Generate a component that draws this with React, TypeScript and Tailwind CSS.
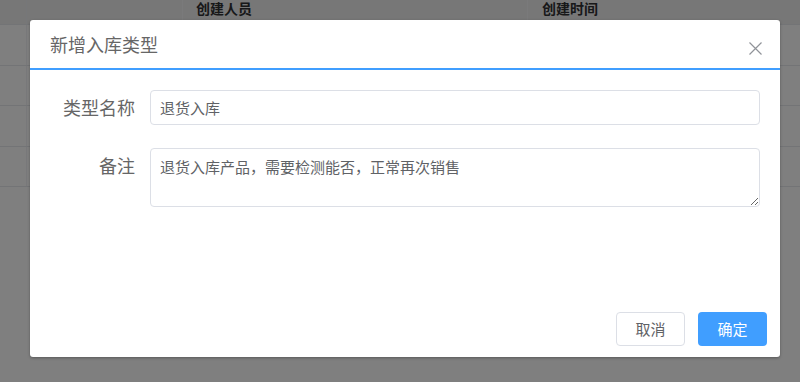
import React from 'react';

const font = { fontFamily: '"Noto Sans CJK SC", "Noto Sans", sans-serif' };

const rows = [0, 1, 2, 3];

function BackgroundTable() {
  return (
    <div className="w-full">
      <div className="flex h-[25px] bg-[#eeeeee] border-b border-[#e6e8ec] text-[14px] font-bold text-[#303133] leading-[17px]">
        <div className="w-[27px] border-r border-[#eceef2]" />
        <div className="w-[156px] border-r border-[#f4f5f7]" />
        <div className="w-[345px] border-r border-[#f4f5f7] pl-[13px]">创建人员</div>
        <div className="flex-1 pl-[14px]">创建时间</div>
      </div>
      {rows.map((r) => (
        <div key={r} className="flex h-[40.5px] bg-white border-b border-[#e6e8ec]">
          <div className="w-[27px] border-r border-[#f0f1f4]" />
          <div className="flex-1" />
        </div>
      ))}
    </div>
  );
}

function CloseIcon() {
  return (
    <svg width="13" height="13" viewBox="0 0 13 13" fill="none">
      <path d="M0.5 0.5L12.5 12.5M12.5 0.5L0.5 12.5" stroke="#909399" strokeWidth="1.2" />
    </svg>
  );
}

export default function App() {
  return (
    <div className="relative w-[800px] h-[382px] overflow-hidden bg-white" style={font}>
      <BackgroundTable />
      <div className="absolute inset-0 bg-black/50" />

      <div className="absolute left-[30px] top-[20px] w-[750px] h-[337px] bg-white rounded-[3px] shadow-[0_1px_3px_rgba(0,0,0,0.3)] flex flex-col">
        <div className="h-[50px] flex items-center px-5 border-b-2 border-[#409eff]">
          <span className="text-[18px] leading-[24px] text-[#666666]">新增入库类型</span>
        </div>
        <button className="absolute right-[18px] top-[22px] flex">
          <CloseIcon />
        </button>

        <div className="flex-1 pt-5 pr-5">
          <div className="flex items-center">
            <label className="w-[120px] pr-[15px] text-right text-[18px] leading-[35px] text-[#666666]">
              类型名称
            </label>
            <input
              className="flex-1 h-[35px] border border-[#dcdfe6] rounded-[4px] pl-[9px] text-[15px] text-[#606266] outline-none"
              defaultValue="退货入库"
            />
          </div>
          <div className="flex items-start mt-[23px]">
            <label className="w-[120px] pr-[15px] text-right text-[18px] leading-[35px] text-[#666666]">
              备注
            </label>
            <textarea
              className="flex-1 h-[59px] border border-[#dcdfe6] rounded-[4px] pl-[9px] pt-[8px] text-[15px] leading-[20px] text-[#606266] outline-none"
              defaultValue="退货入库产品，需要检测能否，正常再次销售"
            />
          </div>
        </div>

        <div className="flex justify-end gap-[13px] pr-[13px] pb-[11px]">
          <button className="w-[69px] h-[34px] border border-[#dcdfe6] rounded-[4px] bg-white text-[15px] text-[#606266]">
            取消
          </button>
          <button className="w-[69px] h-[34px] rounded-[4px] bg-[#409eff] text-[15px] text-white">
            确定
          </button>
        </div>
      </div>
    </div>
  );
}
